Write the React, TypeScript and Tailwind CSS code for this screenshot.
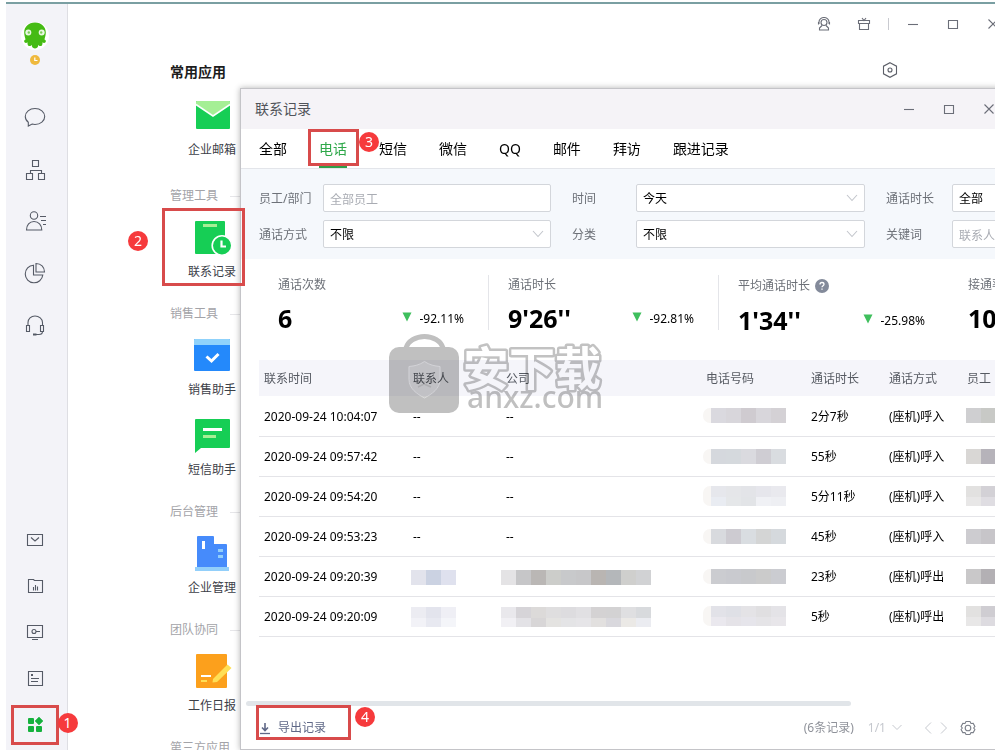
import { ReactNode } from "react";

type Mosaic = { width: number; top: string[]; bottom?: string[]; smudge?: boolean };

interface CallRecord {
  time: string;
  contact: string | Mosaic;
  company: string | Mosaic;
  phone: Mosaic;
  duration: string;
  method: string;
  staff: Mosaic;
}

const records: CallRecord[] = [
  {
    time: "2020-09-24 10:04:07",
    contact: "--",
    company: "--",
    phone: { width: 75, smudge: true, top: ["#dad9df", "#d8d6db", "#cfcbd0", "#d8d6db", "#d4d1d5"] },
    duration: "2分7秒",
    method: "(座机)呼入",
    staff: { width: 45, top: ["#cfcfd1", "#c8c9c6", "#cccccc"] },
  },
  {
    time: "2020-09-24 09:57:42",
    contact: "--",
    company: "--",
    phone: { width: 75, smudge: true, top: ["#d5d8dd", "#d5d9dd", "#dadadf", "#cfcdd3", "#d9dce0"] },
    duration: "55秒",
    method: "(座机)呼入",
    staff: { width: 45, top: ["#d9d7d5", "#b6b3ba", "#c5c3c9"] },
  },
  {
    time: "2020-09-24 09:54:20",
    contact: "--",
    company: "--",
    phone: {
      width: 75,
      smudge: true,
      top: ["#e6e7ec", "#e5e6e9", "#e3e4e8", "#e6e6ec", "#e9e9ee"],
      bottom: ["#e9ecf2", "#e5e7e9", "#e2e4e7", "#f0f1f5", "#eeeff3"],
    },
    duration: "5分11秒",
    method: "(座机)呼入",
    staff: {
      width: 45,
      top: ["#e2e1e0", "#d3d1d6", "#d3d1d6"],
      bottom: ["#e8e7e7", "#dfdde2", "#dfdde2"],
    },
  },
  {
    time: "2020-09-24 09:53:23",
    contact: "--",
    company: "--",
    phone: { width: 75, smudge: true, top: ["#d8dade", "#cdcbd1", "#d9dde1", "#d4d5d5", "#d5d9dd"] },
    duration: "45秒",
    method: "(座机)呼入",
    staff: { width: 45, top: ["#cdccd0", "#c7c5c9", "#cccccc"] },
  },
  {
    time: "2020-09-24 09:20:39",
    contact: { width: 45, top: ["#e2e3ec", "#cbd2e2", "#dfe1ee"] },
    company: {
      width: 150,
      top: [
        "#e4e3e5", "#c6c6c8", "#bab7b5", "#cccdca", "#c8c9cb",
        "#c7c7c9", "#b9b5b2", "#b4b7ba", "#cfcfcd", "#d1d2d4",
      ],
    },
    phone: { width: 75, smudge: true, top: ["#cbccd0", "#c9cacf", "#c8c9cc", "#cbcbcb", "#cbccd1"] },
    duration: "23秒",
    method: "(座机)呼出",
    staff: { width: 45, top: ["#c9c8c9", "#b3b0b4", "#c0bec2"] },
  },
  {
    time: "2020-09-24 09:20:09",
    contact: {
      width: 45,
      top: ["#ececf2", "#e3e4ed", "#efeff5"],
      bottom: ["#f2f2f7", "#e8e9f1", "#f4f5f9"],
    },
    company: {
      width: 150,
      top: [
        "#e9e8ec", "#d6d4d8", "#dcdad9", "#dfdedf", "#dddcdf",
        "#e1e0e3", "#d4d2d3", "#d3d2d3", "#dfdfe1", "#d8dadd",
      ],
      bottom: [
        "#f1f0f4", "#e3e2e6", "#d8d6d7", "#e4e3e1", "#e4e4e6",
        "#e6e5e8", "#e2e0df", "#d9d8dd", "#ebe9e6", "#ebecf1",
      ],
    },
    phone: {
      width: 75,
      smudge: true,
      top: ["#e2e2e8", "#dfe0e6", "#e4e3e6", "#e0dfe1", "#e4e3e7"],
      bottom: ["#eae8ee", "#e5e3e8", "#e6e5eb", "#e5e4e7", "#e8e6ea"],
    },
    duration: "5秒",
    method: "(座机)呼出",
    staff: {
      width: 45,
      top: ["#e2e1e0", "#cfcdd2", "#cfcdd2"],
      bottom: ["#e8e7e7", "#dddbe0", "#dddbe0"],
    },
  },
];

const tabs = ["全部", "电话", "短信", "微信", "QQ", "邮件", "拜访", "跟进记录"];

const stats = [
  { label: "通话次数", value: "6", change: "-92.11%" },
  { label: "通话时长", value: "9'26''", change: "-92.81%" },
  { label: "平均通话时长", value: "1'34''", change: "-25.98%", help: true },
  { label: "接通率", value: "100%" },
];

function MosaicBlock({ data }: { data: Mosaic }) {
  const height = data.bottom ? 20 : 15;
  const split = data.bottom ? 11 : 15;
  return (
    <svg
      width={data.width}
      height={height}
      className={`block shrink-0 overflow-visible ${data.smudge ? "" : "rounded-l"}`}
      aria-hidden="true"
    >
      {data.smudge && <rect x={-8} y={0} width={16} height={height} rx={7} fill="#f8f6f4" />}
      {data.top.map((c, i) => (
        <rect key={i} x={i * 15} y={0} width={15} height={split} fill={c} />
      ))}
      {data.bottom?.map((c, i) => (
        <rect key={i} x={i * 15} y={split} width={15} height={height - split} fill={c} />
      ))}
    </svg>
  );
}

function StepBadge({ children, className }: { children: ReactNode; className: string }) {
  return (
    <span
      className={`absolute z-30 flex h-5 w-5 items-center justify-center rounded-full bg-[#f63a3c] text-sm leading-none text-white ${className}`}
    >
      {children}
    </span>
  );
}

function StepFrame({ className }: { className: string }) {
  return (
    <span
      className={`pointer-events-none absolute z-20 border-3 border-[#d84b4b] ${className}`}
    />
  );
}

function LineIcon({ children, size = 24 }: { children: ReactNode; size?: number }) {
  return (
    <svg
      width={size}
      height={size}
      viewBox={`0 0 ${size} ${size}`}
      fill="none"
      stroke="currentColor"
      strokeWidth="1.1"
      aria-hidden="true"
    >
      {children}
    </svg>
  );
}

function NavButton({ label, children }: { label: string; children: ReactNode }) {
  return (
    <button type="button" aria-label={label} className="relative flex h-6 w-6 items-center justify-center">
      {children}
    </button>
  );
}

function Sidebar() {
  return (
    <nav className="flex w-[62px] shrink-0 flex-col items-center border-r border-[#dedee3] bg-[#f3f3f8] pr-1 pt-4 pb-[13px] text-[#555a66]">
      <button type="button" aria-label="头像" className="flex flex-col items-center">
        <svg width="30" height="30" viewBox="0 0 30 30" aria-hidden="true">
          <circle cx="15" cy="16" r="14" fill="#fff" />
          <path
            d="M15 2.500C8.500 2.500 4.200 7 4.200 12.500c0 3 1 5 1.300 7-1.200.3-1.800 1.700-1 2.800.9 1 2.300.8 3-.1 0 1.300-.1 3 1.200 3.700 1.300.6 2.600-.1 3-1.200.2 1.400.3 2.300 1.300 3.100 1.100.8 2.900.8 4 0 1-.8 1.100-1.700 1.300-3.100.4 1.100 1.700 1.800 3 1.200 1.300-.7 1.200-2.400 1.200-3.700.7.900 2.100 1.100 3 .1.800-1.100.2-2.500-1-2.800.3-2 1.300-4 1.300-7C25.800 7 21.500 2.500 15 2.500z"
            fill="#45bb14"
          />
          <circle cx="8.300" cy="12.500" r="3" fill="#e9f8e2" />
          <circle cx="21.700" cy="12.500" r="3" fill="#e9f8e2" />
          <circle cx="8.800" cy="12.500" r="1.200" fill="#7ccf58" />
          <circle cx="21.200" cy="12.500" r="1.200" fill="#7ccf58" />
        </svg>
        <svg width="10" height="10" viewBox="0 0 10 10" className="mt-[5px]" aria-hidden="true">
          <circle cx="5" cy="5" r="5" fill="#efb93e" />
          <path d="M4.800 2.500v3H7.500" fill="none" stroke="#fff" strokeWidth="1.200" />
        </svg>
      </button>

      <div className="mt-10 flex flex-col gap-7">
        <NavButton label="消息">
          <LineIcon>
            <path d="M12 3.500c5.500 0 9.700 3.500 9.700 8s-4.200 8-9.700 8c-1 0-2-.1-2.900-.4L5.300 21v-3.700C3.400 15.900 2.300 13.800 2.300 11.500c0-4.500 4.200-8 9.700-8z" />
          </LineIcon>
        </NavButton>
        <NavButton label="组织架构">
          <LineIcon>
            <path d="M9.500 3.500h6v6h-6zM3.500 16.500h6v6h-6zM15.500 16.500h6v6h-6zM7.500 16.500v-3h11v3" />
          </LineIcon>
        </NavButton>
        <NavButton label="客户">
          <LineIcon>
            <circle cx="11" cy="6.500" r="3.700" />
            <path d="M3.500 21c0-5 3-8.500 7.500-8.500s7.800 3.500 7.800 8.500zM17 7.500h6M18 11.500h5M20 15.500h3" />
          </LineIcon>
        </NavButton>
        <NavButton label="统计">
          <LineIcon>
            <path d="M10.500 4.200A8.800 8.800 0 1 0 19.800 14h-9.300z" />
            <path d="M13 2.500c5 0 8.500 3.500 8.500 8.500H13z" />
          </LineIcon>
        </NavButton>
        <NavButton label="客服">
          <LineIcon>
            <path d="M5 12.500V9.500C5 6 8 3 12 3s7.500 3 7.500 6.500v3M3.500 12.500h3v6h-3zM17.500 12.500h3v6h-3zM19.500 18.500c0 2-1 3-3.500 3h-5" />
            <path d="M10 21.500h3.500" strokeWidth="2" />
          </LineIcon>
        </NavButton>
      </div>

      <div className="mt-auto flex flex-col gap-[22px]">
        <NavButton label="邮件">
          <LineIcon>
            <path d="M4.500 5.500h15v11h-15zM8 8.500l4 3.500 4-3.500" />
          </LineIcon>
        </NavButton>
        <NavButton label="报表">
          <LineIcon>
            <path d="M5.500 4.500h5l1 1h8v12h-14zM10.500 12v3.500M12.500 10v5.500M14.500 11.500v4" />
          </LineIcon>
        </NavButton>
        <NavButton label="远程">
          <LineIcon>
            <path d="M4.500 4.500h15v12h-15zM9 18.500h6M13 10.500h4" />
            <circle cx="11" cy="10.500" r="2" />
          </LineIcon>
        </NavButton>
        <NavButton label="笔记">
          <LineIcon>
            <path d="M5.500 4.500h14v14h-14zM8 11.500h8M8 14.500h7" />
            <path d="M8 8h2" strokeWidth="2" />
          </LineIcon>
        </NavButton>
        <NavButton label="应用">
          <svg width="24" height="24" viewBox="0 0 24 24" fill="#14b13d" aria-hidden="true">
            <rect x="5" y="5" width="6" height="6" rx="1" />
            <path d="M16 4l4 4-4 4-4-4z" stroke="#14b13d" strokeLinejoin="round" strokeWidth="0.500" />
            <rect x="5" y="13" width="6" height="6" rx="1" />
            <rect x="13" y="13" width="6" height="6" rx="1" />
          </svg>
          <StepFrame className="-inset-x-3 -inset-y-2" />
          <StepBadge className="-right-[31px] top-0">1</StepBadge>
        </NavButton>
      </div>
    </nav>
  );
}

function AppIcon({ children }: { children: ReactNode }) {
  return (
    <svg width="36" height="36" viewBox="0 0 36 36" className="overflow-visible" aria-hidden="true">
      {children}
    </svg>
  );
}

function AppItem({ label, icon, extra }: { label: string; icon: ReactNode; extra?: ReactNode }) {
  return (
    <div className="relative h-20 w-[84px] pt-1">
      <button type="button" className="flex w-full flex-col items-center gap-[9px]">
        {icon}
        <span className="text-xs leading-4 text-[#3c4048]">{label}</span>
      </button>
      {extra}
    </div>
  );
}

function GroupTitle({ children }: { children: ReactNode }) {
  return (
    <h3 className="flex h-[38px] items-center gap-3 text-xs text-[#a3a3a8]">
      {children}
      <span className="h-px flex-1 bg-[#e6e6e9]" />
    </h3>
  );
}

function AppList() {
  return (
    <section className="pl-[102px]">
      <h2 className="text-sm leading-5 font-bold text-[#1c1c1c]">常用应用</h2>
      <div className="mt-[11px] mb-1">
        <AppItem
          label="企业邮箱"
          icon={
            <AppIcon>
              <rect x="2" y="4" width="34" height="28" rx="1" fill="#16ce55" />
              <path d="M2 5a1 1 0 0 1 1-1h32a1 1 0 0 1 1 1v2L19 18.500 2 7z" fill="#a5ef95" />
              <path d="M2 7.500l17 11.500 17-11.500" fill="none" stroke="#fff" strokeWidth="1.600" />
            </AppIcon>
          }
        />
      </div>
      <GroupTitle>管理工具</GroupTitle>
      <AppItem
        label="联系记录"
        icon={
          <AppIcon>
            <rect x="1" y="2" width="30" height="33" rx="1" fill="#16ce55" />
            <rect x="9" y="5" width="14" height="3" fill="#a5ef95" />
            <circle cx="28" cy="26.500" r="9.800" fill="#16ce55" stroke="#fff" strokeWidth="1.600" />
            <path d="M27.500 21.500v6h4.500" fill="none" stroke="#fff" strokeWidth="2.200" />
          </AppIcon>
        }
        extra={
          <>
            <StepFrame className="-top-[7px] -left-2 h-[78px] w-[83px]" />
            <StepBadge className="top-4 -left-[42px]">2</StepBadge>
          </>
        }
      />
      <GroupTitle>销售工具</GroupTitle>
      <AppItem
        label="销售助手"
        icon={
          <AppIcon>
            <rect x="0" y="2" width="36" height="32" rx="1" fill="#2489fb" />
            <path d="M0 3a1 1 0 0 1 1-1h34a1 1 0 0 1 1 1v5H0z" fill="#8fd2fb" />
            <path d="M12.500 19.500l5 4.500 7-7" fill="none" stroke="#fff" strokeWidth="3" />
          </AppIcon>
        }
      />
      <AppItem
        label="短信助手"
        icon={
          <AppIcon>
            <path d="M2 2h33a1 1 0 0 1 1 1v27a1 1 0 0 1-1 1H7l-6 5V3a1 1 0 0 1 1-1z" fill="#16ce55" />
            <rect x="9" y="11" width="19" height="3" fill="#fff" />
            <rect x="9" y="18" width="13" height="3" fill="#a5ef95" />
          </AppIcon>
        }
      />
      <GroupTitle>后台管理</GroupTitle>
      <AppItem
        label="企业管理"
        icon={
          <AppIcon>
            <path d="M4 1h15a1 1 0 0 1 1 1v7h12a1 1 0 0 1 1 1v22H3V2a1 1 0 0 1 1-1z" fill="#468bfb" />
            <rect x="1" y="32" width="34" height="4" fill="#92cffa" />
            <rect x="8" y="6" width="3" height="8" fill="#fff" />
            <rect x="24" y="14" width="5" height="3" fill="#92cffa" />
            <rect x="24" y="20" width="5" height="3" fill="#92cffa" />
          </AppIcon>
        }
      />
      <GroupTitle>团队协同</GroupTitle>
      <AppItem
        label="工作日报"
        icon={
          <AppIcon>
            <rect x="2" y="1" width="31" height="34" rx="1" fill="#fca01c" />
            <path d="M19 26L33.500 11.500l4 3.500L23 29l-4.500.5z" fill="#ffdf55" />
            <rect x="7" y="22" width="10" height="2" fill="#fff" />
            <rect x="7" y="27" width="6" height="2" fill="#ffdf55" />
          </AppIcon>
        }
      />
      <GroupTitle>第三方应用</GroupTitle>
    </section>
  );
}

function WindowControls() {
  return (
    <div className="flex text-[#6b6e78]">
      <button type="button" aria-label="最小化" className="flex h-6 w-10 items-center justify-center">
        <LineIcon size={12}>
          <path d="M1 6.500h10" />
        </LineIcon>
      </button>
      <button type="button" aria-label="最大化" className="flex h-6 w-10 items-center justify-center">
        <LineIcon size={12}>
          <path d="M1.500 2.500h9v8h-9z" />
        </LineIcon>
      </button>
      <button type="button" aria-label="关闭" className="flex h-6 w-10 items-center justify-center">
        <LineIcon size={12}>
          <path d="M1.500 1.500l9 9M10.500 1.500l-9 9" />
        </LineIcon>
      </button>
    </div>
  );
}

function SelectField({ id, value }: { id: string; value: string }) {
  return (
    <div className="relative">
      <select
        id={id}
        defaultValue={value}
        className="block h-7 w-full appearance-none rounded-xs border border-[#d3d6db] bg-white pt-[2px] pl-[6px] text-xs text-black"
      >
        <option>{value}</option>
      </select>
      <svg
        width="12"
        height="8"
        viewBox="0 0 12 8"
        className="pointer-events-none absolute top-[10px] right-[7px]"
        fill="none"
        stroke="#c3c6cc"
        strokeWidth="1.100"
        aria-hidden="true"
      >
        <path d="M1 1l5 5.500L11 1" />
      </svg>
    </div>
  );
}

function TextField({ id, placeholder }: { id: string; placeholder: string }) {
  return (
    <input
      id={id}
      type="text"
      placeholder={placeholder}
      className="block h-7 w-full rounded-xs border border-[#d3d6db] bg-white px-[6px] pt-[2px] text-xs text-black placeholder:text-[#a9acb3]"
    />
  );
}

function FieldLabel({ htmlFor, children }: { htmlFor: string; children: ReactNode }) {
  return (
    <label htmlFor={htmlFor} className="pt-[2px] pl-[21px]">
      {children}
    </label>
  );
}

function Filters() {
  return (
    <form className="grid grid-cols-[85px_228px_85px_229px_87px_200px] items-center gap-y-2 overflow-hidden bg-[#f5f8fc] pt-[15px] pb-[11px] text-xs text-[#6d7178] [margin-left:0]">
      <FieldLabel htmlFor="staff">员工/部门</FieldLabel>
      <TextField id="staff" placeholder="全部员工" />
      <FieldLabel htmlFor="date">时间</FieldLabel>
      <SelectField id="date" value="今天" />
      <FieldLabel htmlFor="length">通话时长</FieldLabel>
      <SelectField id="length" value="全部" />
      <FieldLabel htmlFor="method">通话方式</FieldLabel>
      <SelectField id="method" value="不限" />
      <FieldLabel htmlFor="category">分类</FieldLabel>
      <SelectField id="category" value="不限" />
      <FieldLabel htmlFor="keyword">关键词</FieldLabel>
      <TextField id="keyword" placeholder="联系人" />
    </form>
  );
}

function Stats() {
  return (
    <div className="flex pt-4 pb-[30px] pl-[18px]">
      {stats.map((stat, i) => (
        <div
          key={stat.label}
          className={`h-[55px] w-[230px] shrink-0 pt-[2px] pr-6 pl-[19px] ${
            i < 2 ? "border-r border-[#e4e5e9]" : ""
          }`}
        >
          <div className="flex items-center gap-[5px] text-xs leading-4 text-[#6d7178]">
            {stat.label}
            {stat.help && (
              <svg width="14" height="18" viewBox="0 0 14 18" aria-hidden="true">
                <circle cx="7" cy="9" r="7" fill="#838a9a" />
                <path
                  d="M5 7.500c0-1.200.9-2 2-2s2 .8 2 1.800c0 1.400-2 1.400-2 3M7 11.500v1.300"
                  fill="none"
                  stroke="#fff"
                  strokeWidth="1.300"
                />
              </svg>
            )}
          </div>
          <div className="mt-[9px] flex items-center justify-between">
            <strong className="text-[25px] leading-8 font-bold text-black">{stat.value}</strong>
            {stat.change && (
              <span className="flex items-center gap-[7px] pt-[2px] text-xs text-black">
                <svg width="10" height="10" viewBox="0 0 10 10" className="mb-1" aria-hidden="true">
                  <path d="M0.500 0.500h9L5 9.500z" fill="#3fbf5d" />
                </svg>
                {stat.change}
              </span>
            )}
          </div>
        </div>
      ))}
    </div>
  );
}

function RecordTable() {
  return (
    <div className="pl-[18px]">
      <table className="w-full table-fixed border-collapse text-left text-xs text-black">
        <colgroup>
          <col className="w-[149px]" />
          <col className="w-[93px]" />
          <col className="w-[200px]" />
          <col className="w-[105px]" />
          <col className="w-[78px]" />
          <col className="w-[78px]" />
          <col />
        </colgroup>
        <thead>
          <tr className="h-9 bg-[#f5f5fa] text-[#565a62]">
            {["联系时间", "联系人", "公司", "电话号码", "通话时长", "通话方式", "员工"].map((h) => (
              <th key={h} className="pt-[2px] pl-[5px] font-normal">{h}</th>
            ))}
          </tr>
        </thead>
        <tbody>
          {records.map((r) => (
            <tr key={r.time} className="h-10 border-b border-[#e4e4e8] whitespace-nowrap">
              <td className="pt-[2px] pl-[5px]">{r.time}</td>
              <td className={typeof r.contact === "string" ? "pt-[2px] pl-[5px]" : "pt-[2px] pl-[3px]"}>
                {typeof r.contact === "string" ? r.contact : <MosaicBlock data={r.contact} />}
              </td>
              <td className={typeof r.company === "string" ? "pt-[2px] pl-[5px]" : "pt-[2px] pl-0"}>
                {typeof r.company === "string" ? r.company : <MosaicBlock data={r.company} />}
              </td>
              <td className="pl-[10px]">
                <MosaicBlock data={r.phone} />
              </td>
              <td className="pt-[2px] pl-[5px]">{r.duration}</td>
              <td className="pt-[2px] pl-[5px]">{r.method}</td>
              <td className="pl-1">
                <MosaicBlock data={r.staff} />
              </td>
            </tr>
          ))}
        </tbody>
      </table>
    </div>
  );
}

function Watermark() {
  return (
    <svg
      width="222"
      height="84"
      viewBox="0 0 222 84"
      className="pointer-events-none absolute top-[243px] left-[147px] z-10 mix-blend-multiply"
      aria-hidden="true"
    >
      <rect x="1" y="15" width="70" height="66" rx="10" fill="#c0c0c0" />
      <path d="M18 16a19 15 0 0 1 37 0" fill="none" stroke="#c0c0c0" strokeWidth="5" />
      <path
        d="M36.500 29.500c5 3.500 10 4.500 15.500 5v13c0 9-8 14.500-15.500 18.500C29 62 21 56.500 21 47.500v-13c5.500-.5 10.500-1.500 15.500-5z"
        fill="#c9c9c9"
        stroke="#dcdcdc"
      />
      <path d="M27 50h20M30 55l6-3 7 3" fill="none" stroke="#b5b5b5" strokeWidth="1.500" />
      <text
        x="75"
        y="53"
        fontSize="46"
        fontWeight="700"
        fill="#fff"
        stroke="#c2c2c2"
        strokeWidth="5"
        strokeLinejoin="round"
        paintOrder="stroke"
      >
        安下载
      </text>
      <text x="79" y="76" fontSize="30" fontWeight="500" fill="#c0c0c0">
        anxz.com
      </text>
    </svg>
  );
}

function Footer() {
  return (
    <footer className="flex h-[43px] items-center justify-between pr-9 pl-[18px] text-xs">
      <div className="relative">
        <button type="button" className="flex items-center gap-[7px] text-[#5f6887]">
          <svg width="12" height="14" viewBox="0 0 12 14" fill="none" stroke="currentColor" aria-hidden="true">
            <path d="M6 2v7M3 6.500l3 3 3-3" strokeWidth="1.600" />
            <path d="M1 12.500h10" strokeWidth="1.300" />
          </svg>
          导出记录
        </button>
        <StepFrame className="-top-[15px] -left-[3px] h-[35px] w-[95px]" />
        <StepBadge className="-top-[13px] left-24">4</StepBadge>
      </div>
      <div className="flex items-center text-[#c5c8ce]">
        <span className="text-[#8f929a]">(6条记录)</span>
        <button type="button" className="ml-[14px] flex items-center gap-[6px]">
          1/1
          <svg width="10" height="7" viewBox="0 0 10 7" fill="none" stroke="currentColor" aria-hidden="true">
            <path d="M0.500 1L5 5.500 9.500 1" />
          </svg>
        </button>
        <button type="button" aria-label="上一页" className="ml-[22px]">
          <svg width="8" height="12" viewBox="0 0 8 12" fill="none" stroke="currentColor" aria-hidden="true">
            <path d="M7 0.500L1.500 6 7 11.500" />
          </svg>
        </button>
        <button type="button" aria-label="下一页" className="ml-2">
          <svg width="8" height="12" viewBox="0 0 8 12" fill="none" stroke="currentColor" aria-hidden="true">
            <path d="M1 0.500L6.500 6 1 11.500" />
          </svg>
        </button>
        <button type="button" aria-label="设置" className="ml-3 text-[#7c808a]">
          <LineIcon size={16}>
            <path d="M6 1.500h4l1 2 2.200-.1 1.700 3.100L13.700 8l1.200 1.500-1.700 3.100-2.200-.1-1 2H6l-1-2-2.200.1-1.700-3.100L2.300 8 1.100 6.500l1.700-3.100 2.200.1z" />
            <circle cx="8" cy="8" r="2.800" />
          </LineIcon>
        </button>
      </div>
    </footer>
  );
}

function RecordWindow() {
  return (
    <section className="absolute top-[84px] right-0 bottom-0 left-[234px] z-10 flex flex-col overflow-hidden border border-[#c4c4c8] bg-white shadow-[0_0_6px_rgba(0,0,0,0.3)]">
      <header className="flex h-10 shrink-0 items-center justify-between bg-[#f5f3f7] pr-[3px] pl-[14px]">
        <h2 className="text-sm text-[#50535a]">联系记录</h2>
        <WindowControls />
      </header>

      <div className="flex h-10 shrink-0 items-stretch gap-8 border-b border-[#e3e5ea] pl-[18px] text-sm text-black">
        {tabs.map((tab) =>
          tab === "电话" ? (
            <div key={tab} className="relative flex">
              <button type="button" className="border-y-2 border-t-transparent border-b-[#2f9e48] text-[#2fa84a]">
                {tab}
              </button>
              <StepFrame className="top-0 -left-[11px] h-[37px] w-[51px]" />
              <StepBadge className="top-[3px] left-10">3</StepBadge>
            </div>
          ) : (
            <button key={tab} type="button">
              {tab}
            </button>
          )
        )}
      </div>

      <div className="bg-[#f5f8fc]">
        <div className="-ml-[3px]">
          <Filters />
        </div>
      </div>
      <Stats />
      <RecordTable />
      <Watermark />

      <div className="mt-auto pl-[5px]">
        <div className="h-[5px] w-[79%] rounded-full bg-[#e1e5e9]" />
      </div>
      <Footer />
    </section>
  );
}

export default function App() {
  return (
    <div className="h-screen overflow-hidden bg-white pt-[2px] font-['Noto_Sans','Noto_Sans_CJK_SC',sans-serif]">
      <div className="relative -mr-[18px] ml-[6px] flex h-full border-t-2 border-[#7a9fa2]">
        <Sidebar />
        <main className="min-w-0 flex-1">
          <header className="flex h-10 items-center justify-end text-[#6b6e78]">
            <button type="button" aria-label="客服" className="flex h-6 w-10 items-center justify-center">
              <LineIcon size={14}>
                <circle cx="7" cy="5.500" r="3" />
                <path d="M2 7V5c0-2.500 2-4.500 5-4.500S12 2.500 12 5v2M1.500 5v2.500M12.500 5v2.500M5 8.500L2.500 11v2h9v-2L9 8.500" />
              </LineIcon>
            </button>
            <button type="button" aria-label="礼物" className="flex h-6 w-10 items-center justify-center">
              <LineIcon size={14}>
                <path d="M1.500 3.500h11v3h-11zM2.500 6.500v6h9v-6M5 1l2 2.500L9 1" />
              </LineIcon>
            </button>
            <span className="mx-1 h-3 w-px bg-[#c9cad0]" />
            <WindowControls />
          </header>
          <div className="flex h-[18px] justify-end pt-[18px] pr-[115px] text-[#5c5f68]">
            <button type="button" aria-label="应用设置" className="h-4 w-4">
              <LineIcon size={16}>
                <path d="M8 0.700l6.500 3.500v7.600L8 15.300l-6.500-3.500V4.200z" />
                <circle cx="8" cy="8" r="2" />
              </LineIcon>
            </button>
          </div>
          <AppList />
        </main>
        <RecordWindow />
      </div>
    </div>
  );
}
